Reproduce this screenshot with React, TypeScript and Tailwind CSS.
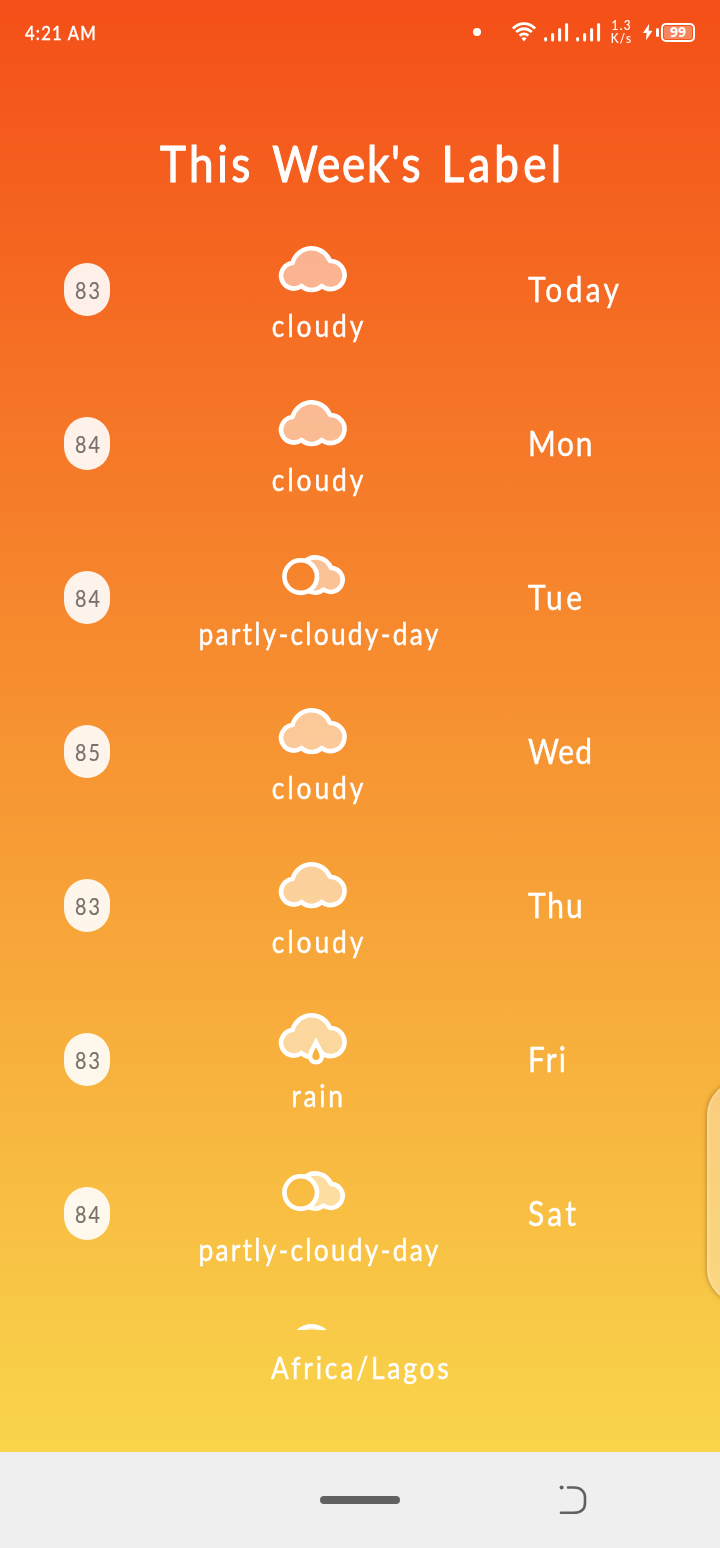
import React from "react";

type Condition = "cloudy" | "partly-cloudy-day" | "rain";

interface Forecast {
  temp: number;
  condition: Condition;
  day: string;
  dayClass: string;
}

const week: Forecast[] = [
  { temp: 83, condition: "cloudy", day: "Today", dayClass: "tracking-[3.8px]" },
  { temp: 84, condition: "cloudy", day: "Mon", dayClass: "tracking-[1.9px]" },
  { temp: 84, condition: "partly-cloudy-day", day: "Tue", dayClass: "tracking-[4px]" },
  { temp: 85, condition: "cloudy", day: "Wed", dayClass: "tracking-[1.2px]" },
  { temp: 83, condition: "cloudy", day: "Thu", dayClass: "tracking-[2.2px]" },
  { temp: 83, condition: "rain", day: "Fri", dayClass: "tracking-[2.4px]" },
  { temp: 84, condition: "partly-cloudy-day", day: "Sat", dayClass: "tracking-[3.7px]" },
];

const conditionClass: Record<Condition, string> = {
  cloudy: "pl-[2.6px] tracking-[3.3px]",
  "partly-cloudy-day": "pl-[3.2px] tracking-[2.5px]",
  rain: "pl-[2px] tracking-[3px]",
};

const CLOUD =
  "M24.5 42A12.8 12.8 0 1 1 15.5 19A19.7 19.7 0 0 1 53 17A14.05 14.05 0 1 1 44.7 42A14.7 14.7 0 0 1 24.5 42Z";
const DROP = "M39 28.5C41.5 34 45 38 45 42.3A6 6 0 0 1 33 42.3C33 38 36.5 34 39 28.5Z";

function WeatherIcon({ kind, id }: { kind: Condition; id: string }) {
  return (
    <svg width="72" height="54" viewBox="0 0 72 54" className="block shrink-0 overflow-visible" fill="none" stroke="white" strokeWidth="4.6" strokeLinejoin="round">
      {kind === "cloudy" && <path d={CLOUD} fill="white" fillOpacity="0.5" />}
      {kind === "rain" && (
        <>
          <mask id={id} maskUnits="userSpaceOnUse" x="0" y="-5" width="72" height="60">
            <rect x="0" y="-5" width="72" height="60" fill="white" stroke="none" />
            <path d={DROP} fill="black" stroke="none" />
          </mask>
          <g mask={`url(#${id})`}>
            <path d={CLOUD} transform="translate(0 -3)" fill="white" fillOpacity="0.5" />
          </g>
          <path d={DROP} strokeLinejoin="miter" />
        </>
      )}
      {kind === "partly-cloudy-day" && (
        <>
          <mask id={id} maskUnits="userSpaceOnUse" x="0" y="0" width="72" height="54">
            <rect width="72" height="54" fill="white" stroke="none" />
            <circle cx="23.7" cy="24.6" r="16.3" fill="black" stroke="none" />
          </mask>
          <g mask={`url(#${id})`}>
            <path d="M26.8 10.5A16.5 16.5 0 0 1 54 15.9A12 12 0 1 1 46.5 37.5A13 13 0 0 1 30 38Z" fill="white" fillOpacity="0.5" />
          </g>
          <circle cx="23.7" cy="24.6" r="16.3" />
        </>
      )}
    </svg>
  );
}

function Row({ item, index }: { item: Forecast; index: number }) {
  return (
    <li className="flex h-[154px] shrink-0 items-center pl-16">
      <div className="flex h-[53px] w-[46px] shrink-0 items-center justify-center rounded-[23px] bg-white/90 pt-[3px] text-[23.5px] text-[#77706b] -mt-[2px] [-webkit-text-stroke:0.2px_currentColor]">
        <span className="scale-x-[0.84] pl-[2.5px] tracking-[2.5px]">{item.temp}</span>
      </div>
      <div className="flex h-full w-[416px] shrink-0 flex-col items-center pt-[31px]">
        <div className="-ml-[10px]">
          <WeatherIcon kind={item.condition} id={`cut-${index}`} />
        </div>
        <span className={`mt-[9px] scale-x-[0.88] text-[30px] leading-9 ${conditionClass[item.condition]}`}>{item.condition}</span>
      </div>
      <span className={`-mt-[2px] ml-[2px] origin-left scale-x-[0.88] text-[34px] leading-10 ${item.dayClass}`}>{item.day}</span>
    </li>
  );
}

function Signal() {
  return (
    <svg width="25" height="20" viewBox="0 0 25 20" stroke="white" strokeWidth="3" strokeLinecap="round">
      <path d="M1.6 16.5V18M8.6 12.5V18M15.6 7.5V18M22.6 2.5V18" />
    </svg>
  );
}

function StatusBar() {
  return (
    <header className="flex h-16 items-center px-[25px]">
      <span className="origin-left scale-x-[0.88] pt-[2px] text-[19px] tracking-[1.3px]">4:21 AM</span>
      <div className="ml-auto flex items-center">
        <span className="mr-[31px] size-2 rounded-full bg-white" />
        <svg width="24" height="20" viewBox="0 0 24 20" fill="none" stroke="white" strokeWidth="2.8" className="mr-2">
          <path d="M.9 6.5C7.2-.1 16.8-.1 23.1 6.5M4.2 10.1C8.7 5.6 15.3 5.6 19.8 10.1M7.7 13.7C10.2 11.2 13.8 11.2 16.3 13.7" />
          <path d="M9.5 16.2Q12 14.4 14.5 16.2L12 19.5Z" fill="white" stroke="none" />
        </svg>
        <Signal />
        <span className="w-[7px]" />
        <Signal />
        <div className="ml-[9px] mr-[11px] flex w-[22px] flex-col items-center text-[13px] leading-[13px] [-webkit-text-stroke:0.1px_white]">
          <span className="scale-x-90 pl-[1.5px] tracking-[1.5px]">1.3</span>
          <span className="scale-x-90 pl-[1.5px] tracking-[1.5px]">K/s</span>
        </div>
        <svg width="10" height="18" viewBox="0 0 11 18" fill="white" className="mr-[3px]">
          <path d="M6.8 0L0 10H4L3.3 18L10.5 7.5H6.2Z" />
        </svg>
        <span className="mr-[2px] h-[9px] w-[3px] rounded-sm bg-white" />
        <div className="flex h-[19px] w-[34px] items-center justify-center rounded-[5px] border-2 border-white p-px">
          <span className="flex h-full w-full items-center justify-center rounded-[2px] bg-white/30 font-['Open_Sans'] text-[14px] font-bold leading-none [-webkit-text-stroke:0px]">
            99
          </span>
        </div>
      </div>
    </header>
  );
}

export default function App() {
  return (
    <div className="relative flex h-[1548px] w-[720px] flex-col overflow-hidden font-[Lato,sans-serif] font-normal text-white [-webkit-text-stroke:0.4px_currentColor]">
      <main className="flex h-[1452px] shrink-0 flex-col bg-linear-to-b/srgb from-[#f44f18] to-[#f9d54b]">
        <StatusBar />
        <h1 className="flex h-[149px] scale-x-[0.88] items-center justify-center whitespace-pre pl-[6px] pt-[48px] text-[50px] leading-none tracking-[4px] [-webkit-text-stroke:1.1px_white]">
          <span className="mr-1">This </span>
          <span className="mr-[7px] tracking-[2px]">Week's </span>
          <span className="tracking-[4.8px]">Label</span>
        </h1>
        <ul className="flex h-[1117px] shrink-0 flex-col overflow-hidden">
          {week.map((item, i) => (
            <Row key={item.day} item={item} index={i} />
          ))}
          <li className="flex h-[154px] w-[626px] shrink-0 justify-center pt-[31px]">
            <WeatherIcon kind="cloudy" id="next" />
          </li>
        </ul>
        <p className="flex h-[74px] scale-x-[0.88] items-center justify-center pl-[3px] text-[30px] leading-none tracking-[3.2px]">Africa/Lagos</p>
      </main>
      <nav className="flex h-24 shrink-0 items-center bg-[#efefef] pl-[320px]">
        <span className="h-2 w-20 rounded-full bg-[#616161]" />
        <svg width="28" height="30" viewBox="0 0 28 30" fill="none" stroke="#616161" strokeWidth="2.6" strokeLinecap="round" className="ml-[159px]">
          <path d="M9 2.5H15C22 2.5 26 6.8 26 12.3V18.3C26 24.3 22 27.8 15 27.8H2" />
          <circle cx="2.6" cy="2.5" r="2" fill="#616161" stroke="none" />
        </svg>
      </nav>
      <div className="absolute -right-[67px] top-[1081px] h-[222px] w-20 rounded-[34px] bg-[#fbeac8]/45 shadow-[0_0_5px_rgba(90,50,0,0.5),inset_1px_0_3px_rgba(255,255,255,0.4)]" />
    </div>
  );
}
